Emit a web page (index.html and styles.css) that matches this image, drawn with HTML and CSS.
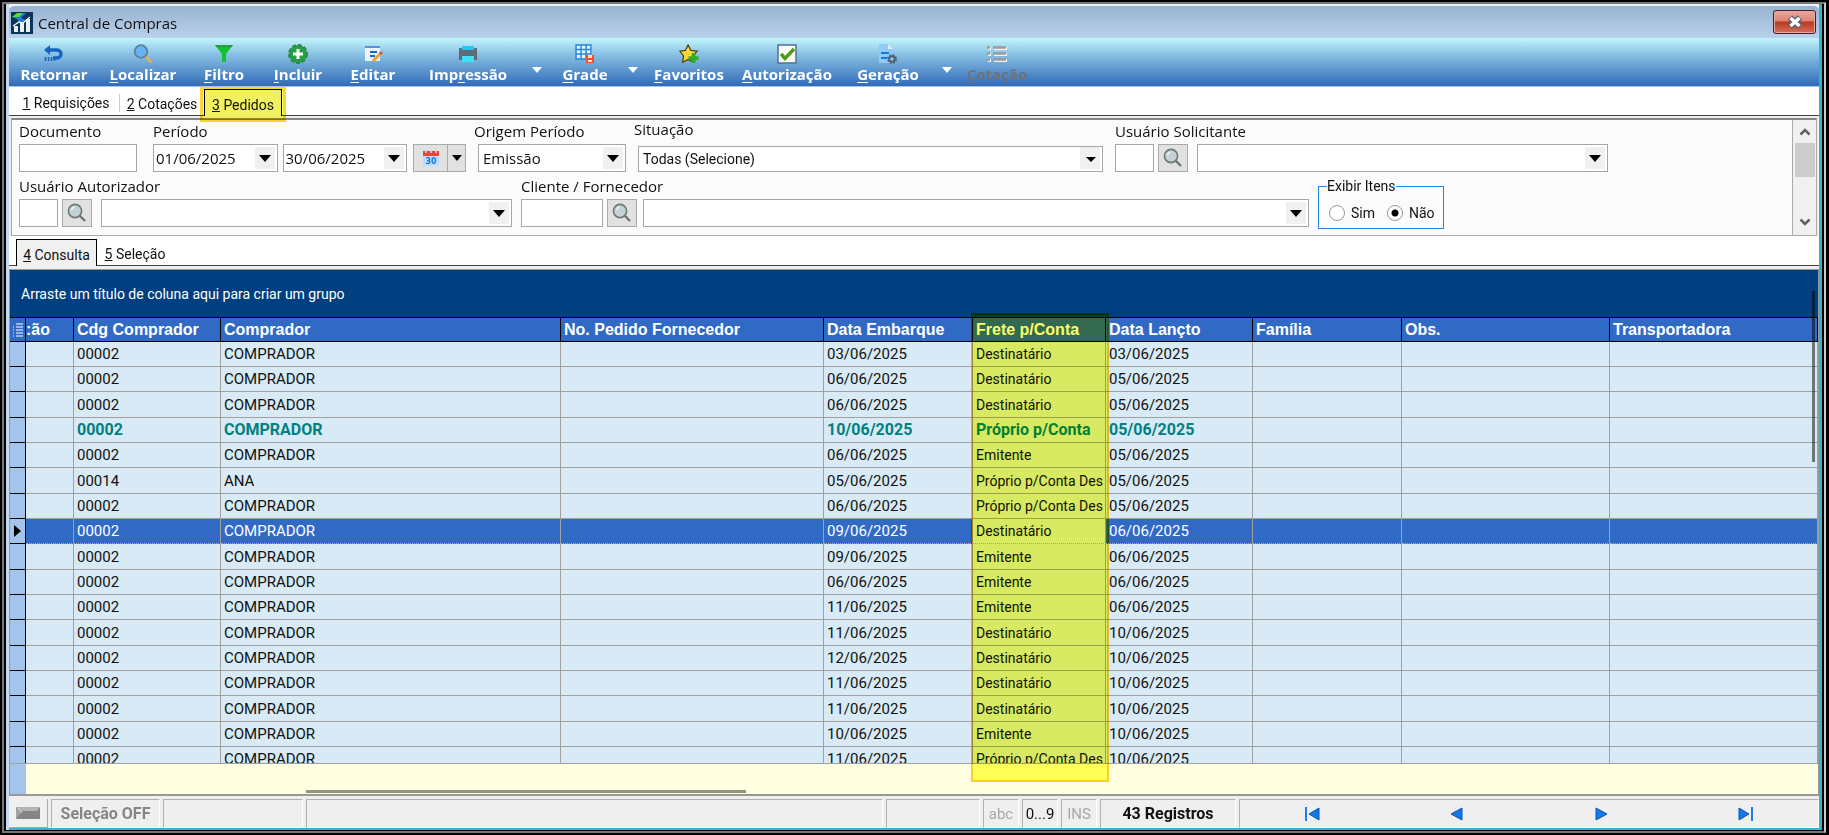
FILE: index.html
```html
<!DOCTYPE html>
<html lang="pt-BR">
<head>
  <meta charset="UTF-8" />
  <meta name="viewport" content="width=device-width, initial-scale=1.0"/>
  <title>Central de Compras</title>
  <link rel="stylesheet" href="styles.css">
</head>
<body>

<!-- shared magnifier -->
<svg width="0" height="0" class="defs">
  <symbol id="lupa" viewBox="0 0 20 20">
    <path d="M12.5 12.5L18 18" stroke="#6f7373" stroke-width="2.4"/>
    <circle cx="8" cy="8" r="6.6" fill="#c3d3d3" stroke="#6f7878" stroke-width="1.6"/>
    <path d="M4.5 7a4 4 0 0 1 3-3" stroke="#eef5f5" stroke-width="1.4" fill="none"/>
  </symbol>
</svg>

<div class="window">
  <header class="titlebar">
    <svg class="app-icon" viewBox="0 0 22 22">
      <rect width="22" height="22" fill="#0a3558"/>
      <path d="M1 5L7 1h8l-5 5 5 2-6 4-3-5z" fill="#1d7fd6"/>
      <path d="M1 5L6 1h6L8 5z" fill="#5fdc1c"/>
      <path d="M3 14h4v6H3zM9 11h4v9H9zM15 7h4v13h-4z" fill="#e8eef4"/>
      <path d="M2 14l6-4 4 1 7-6" stroke="#fff" stroke-width="1.2" fill="none"/>
    </svg>
    <h1>Central de Compras</h1>
    <button class="close" aria-label="Fechar">
      <svg width="18" height="14" viewBox="0 0 18 14"><path d="M4 2.500L14 11.500M14 2.500L4 11.500" stroke="#5b5e70" stroke-width="6"/><path d="M4.500 3L13.500 11M13.500 3L4.500 11" stroke="#fff" stroke-width="3.400"/></svg>
    </button>
  </header>

  <nav class="toolbar">
    <button class="w90"><svg viewBox="0 0 20 20"><path d="M5 6h8a4 4 0 0 1 0 8H9" fill="none" stroke="#1565c0" stroke-width="3.400"/><path d="M0 6l6-5v10z" fill="#1565c0"/><path d="M1.500 13v4M4.500 13v4M7.500 13v4M10.500 15v2" stroke="#1565c0" stroke-width="1.500"/></svg>Retornar</button>
    <button class="w88"><svg viewBox="0 0 20 20"><path d="M12 12l6.500 6.500" stroke="#d9b35c" stroke-width="2.800"/><circle cx="8" cy="7.500" r="6.300" fill="#64b5f6" stroke="#5f7f9c" stroke-width="1.800"/></svg><span><u>L</u>ocalizar</span></button>
    <button class="w74"><svg viewBox="0 0 20 20"><path d="M1 1h18l-7 9v8H8v-8z" fill="#12c22f"/><path d="M1 1h18l-2 2.500H3z" fill="#2e9b3c"/></svg><span><u>F</u>iltro</span></button>
    <button class="w74"><svg viewBox="0 0 20 20"><circle cx="10" cy="10" r="9" fill="#23a045" stroke="#2c8a45" stroke-width="2" stroke-dasharray="4 2"/><path d="M10 5v10M5 10h10" stroke="#fff" stroke-width="3"/></svg><span><u>I</u>ncluir</span></button>
    <button class="w76"><svg viewBox="0 0 20 20"><path d="M2 2h15v15H2z" fill="#eef3fb"/><path d="M2 2h15v2H2z" fill="#5c8fd8"/><path d="M7 8h7M7 12h5" stroke="#1668d0" stroke-width="2"/><path d="M10 17l8-8" stroke="#f4a11f" stroke-width="3"/><path d="M17 10l2-2" stroke="#e05252" stroke-width="3"/></svg><span><u>E</u>ditar</span></button>
    <button class="w114"><svg viewBox="0 0 20 20"><path d="M4 2h12v5H4z" fill="#26c6f2"/><path d="M1 4h3v2h12V4h3v12h-3v-4H4v4H1z" fill="#606a74"/><rect x="4" y="12" width="12" height="6" fill="#40e0fb"/></svg><span>Imp<u>r</u>essão</span></button>
    <button class="drop" aria-label="Opções de impressão"></button>
    <button class="w72"><svg viewBox="0 0 20 20"><path d="M1 1h16v14H1z" fill="#e6f4fc"/><path d="M1 1h15v14H1zM1 5.500h15M1 10h15M6 1v14M11 1v14" fill="none" stroke="#2487dc" stroke-width="1.500"/><path d="M11 11h8v8h-8z" fill="#f4511e"/><path d="M13 11h4v3h-4zM13 16h4v2h-4z" fill="#ffe3dc"/></svg><span><u>G</u>rade</span></button>
    <button class="drop" aria-label="Opções de grade"></button>
    <button class="w88"><svg class="star" viewBox="0 0 22 22"><path d="M10 1l3 6 7 1-5 5 1 7-6-3-6 3 1-7-4-5 6-1z" fill="#fdd835" stroke="#4b3d10" stroke-width="1.300"/><path d="M16 10v11M10.500 15.500h11" stroke="#2fae2b" stroke-width="4.200"/></svg><span><u>F</u>avoritos</span></button>
    <button class="w108"><svg viewBox="0 0 20 20"><rect x="1" y="1" width="18" height="18" fill="#f8faf6" stroke="#4e7396" stroke-width="1.500"/><path d="M4 10l4 4.500L17 5" fill="none" stroke="#4f9c12" stroke-width="3.400"/></svg><span><u>A</u>utorização</span></button>
    <button class="w94"><svg viewBox="0 0 20 20"><path d="M1 0h9l5 5v14H1z" fill="#90caf9"/><path d="M10 0v5h5z" fill="#e1f1fd"/><path d="M3 9h8M3 14h6" stroke="#1976d2" stroke-width="2.200"/><circle cx="14" cy="15" r="2.800" fill="none" stroke="#4b626e" stroke-width="2"/><circle cx="14" cy="15" r="4.200" fill="none" stroke="#4b626e" stroke-width="1.500" stroke-dasharray="2 1.300"/></svg><span><u>G</u>eração</span></button>
    <button class="drop" aria-label="Opções de geração"></button>
    <button class="w76" disabled><svg viewBox="0 0 20 20"><path d="M1 4.500h3M7 4.500h13M1 10.500h3M7 10.500h13M1 16.500h3M7 16.500h13" stroke="#f2f2f2" stroke-width="3"/><path d="M0 3.500h3M6 3.500h13M0 9.500h3M6 9.500h13M0 15.500h3M6 15.500h13" stroke="#9b9b9b" stroke-width="2.400"/></svg><span><u>C</u>otação</span></button>
  </nav>

  <div class="tabs main-tabs">
    <button class="tab-req"><u>1</u>&nbsp;Requisições</button>
    <button class="tab-cot"><u>2</u>&nbsp;Cotações</button>
    <button class="tab-ped active marked"><u>3</u>&nbsp;Pedidos</button>
  </div>

  <section class="filters">
    <form class="fields">
      <div class="row row1">
        <div class="field">
          <label for="doc">Documento</label>
          <input id="doc" class="doc" type="text">
        </div>
        <div class="field">
          <label for="ini">Período</label>
          <div class="line date-line">
            <span class="combo date"><input id="ini" type="text" value="01/06/2025"></span>
            <span class="combo date"><input type="text" value="30/06/2025" aria-label="Período final"></span>
            <div class="calendar">
              <button type="button" class="cal" aria-label="Calendário"><svg viewBox="0 0 18 18"><rect x="1" y="5" width="16" height="12" fill="#bbdefb"/><rect x="1" y="2" width="16" height="5" fill="#e8453c"/><path d="M4 0v4M9 0v4M14 0v4" stroke="#d5dde2" stroke-width="1.500"/><text x="9" y="15" text-anchor="middle">30</text></svg></button>
              <button type="button" class="cal-drop" aria-label="Opções de período"></button>
            </div>
          </div>
        </div>
        <div class="field origem">
          <label for="origem">Origem Período</label>
          <span class="combo"><select id="origem"><option>Emissão</option></select></span>
        </div>
        <div class="field situacao">
          <label for="sit">Situação</label>
          <span class="combo short"><select id="sit"><option>Todas (Selecione)</option></select></span>
        </div>
        <div class="field">
          <label for="sol">Usuário Solicitante</label>
          <div class="line">
            <input id="sol" class="code" type="text">
            <button type="button" class="find" aria-label="Procurar"><svg><use href="#lupa"/></svg></button>
            <span class="combo grow"><select aria-label="Nome do solicitante"><option></option></select></span>
          </div>
        </div>
      </div>
      <div class="row row2">
        <div class="field">
          <label for="aut">Usuário Autorizador</label>
          <div class="line">
            <input id="aut" class="code" type="text">
            <button type="button" class="find" aria-label="Procurar"><svg><use href="#lupa"/></svg></button>
            <span class="combo grow"><select aria-label="Nome do autorizador"><option></option></select></span>
          </div>
        </div>
        <div class="field">
          <label for="cli">Cliente / Fornecedor</label>
          <div class="line client">
            <input id="cli" class="code wide" type="text">
            <button type="button" class="find" aria-label="Procurar"><svg><use href="#lupa"/></svg></button>
            <span class="combo grow"><select aria-label="Nome do fornecedor"><option></option></select></span>
          </div>
        </div>
        <fieldset>
          <legend>Exibir Itens</legend>
          <label><input type="radio" name="itens">Sim</label>
          <label><input type="radio" name="itens" checked>Não</label>
        </fieldset>
      </div>
    </form>
    <div class="scroll">
      <svg viewBox="0 0 12 8"><path d="M1.500 6.500L6 2l4.500 4.500"/></svg>
      <div class="thumb"></div>
      <svg class="down" viewBox="0 0 12 8"><path d="M1.500 1.500L6 6l4.500-4.500"/></svg>
    </div>
  </section>

  <div class="tabs sub-tabs">
    <button class="tab-con active"><u>4</u>&nbsp;Consulta</button>
    <button class="tab-sel"><u>5</u>&nbsp;Seleção</button>
  </div>

  <main class="grid">
    <div class="group-bar">Arraste um título de coluna aqui para criar um grupo</div>
    <div class="rows">
      <table>
        <colgroup>
          <col class="c-ind"><col class="c-cut"><col class="c-cdg"><col class="c-comp"><col class="c-ped"><col class="c-emb"><col class="c-fre"><col class="c-lan"><col class="c-fam"><col class="c-obs"><col>
        </colgroup>
        <thead>
          <tr><th><svg class="list" viewBox="0 0 10 14"><path d="M0 4h1M0 7h1M0 10h1M0 13h1M3 1h7M3 4h7M3 7h7M3 10h7M3 13h7" stroke="#fff" stroke-width="1"/></svg></th><th class="cut">:ão</th><th>Cdg Comprador</th><th>Comprador</th><th>No. Pedido Fornecedor</th><th>Data Embarque</th><th>Frete p/Conta</th><th>Data Lançto</th><th>Família</th><th>Obs.</th><th>Transportadora</th></tr>
        </thead>
        <tbody>
          <tr><td></td><td></td><td>00002</td><td>COMPRADOR</td><td></td><td>03/06/2025</td><td>Destinatário</td><td>03/06/2025</td><td></td><td></td><td></td></tr>
          <tr><td></td><td></td><td>00002</td><td>COMPRADOR</td><td></td><td>06/06/2025</td><td>Destinatário</td><td>05/06/2025</td><td></td><td></td><td></td></tr>
          <tr><td></td><td></td><td>00002</td><td>COMPRADOR</td><td></td><td>06/06/2025</td><td>Destinatário</td><td>05/06/2025</td><td></td><td></td><td></td></tr>
          <tr class="strong"><td></td><td></td><td>00002</td><td>COMPRADOR</td><td></td><td>10/06/2025</td><td>Próprio p/Conta</td><td>05/06/2025</td><td></td><td></td><td></td></tr>
          <tr><td></td><td></td><td>00002</td><td>COMPRADOR</td><td></td><td>06/06/2025</td><td>Emitente</td><td>05/06/2025</td><td></td><td></td><td></td></tr>
          <tr><td></td><td></td><td>00014</td><td>ANA</td><td></td><td>05/06/2025</td><td>Próprio p/Conta Des</td><td>05/06/2025</td><td></td><td></td><td></td></tr>
          <tr><td></td><td></td><td>00002</td><td>COMPRADOR</td><td></td><td>06/06/2025</td><td>Próprio p/Conta Des</td><td>05/06/2025</td><td></td><td></td><td></td></tr>
          <tr class="selected"><td><i class="pointer"></i></td><td></td><td>00002</td><td>COMPRADOR</td><td></td><td>09/06/2025</td><td class="focus">Destinatário</td><td>06/06/2025</td><td></td><td></td><td></td></tr>
          <tr><td></td><td></td><td>00002</td><td>COMPRADOR</td><td></td><td>09/06/2025</td><td>Emitente</td><td>06/06/2025</td><td></td><td></td><td></td></tr>
          <tr><td></td><td></td><td>00002</td><td>COMPRADOR</td><td></td><td>06/06/2025</td><td>Emitente</td><td>06/06/2025</td><td></td><td></td><td></td></tr>
          <tr><td></td><td></td><td>00002</td><td>COMPRADOR</td><td></td><td>11/06/2025</td><td>Emitente</td><td>06/06/2025</td><td></td><td></td><td></td></tr>
          <tr><td></td><td></td><td>00002</td><td>COMPRADOR</td><td></td><td>11/06/2025</td><td>Destinatário</td><td>10/06/2025</td><td></td><td></td><td></td></tr>
          <tr><td></td><td></td><td>00002</td><td>COMPRADOR</td><td></td><td>12/06/2025</td><td>Destinatário</td><td>10/06/2025</td><td></td><td></td><td></td></tr>
          <tr><td></td><td></td><td>00002</td><td>COMPRADOR</td><td></td><td>11/06/2025</td><td>Destinatário</td><td>10/06/2025</td><td></td><td></td><td></td></tr>
          <tr><td></td><td></td><td>00002</td><td>COMPRADOR</td><td></td><td>11/06/2025</td><td>Destinatário</td><td>10/06/2025</td><td></td><td></td><td></td></tr>
          <tr><td></td><td></td><td>00002</td><td>COMPRADOR</td><td></td><td>10/06/2025</td><td>Emitente</td><td>10/06/2025</td><td></td><td></td><td></td></tr>
          <tr><td></td><td></td><td>00002</td><td>COMPRADOR</td><td></td><td>11/06/2025</td><td>Próprio p/Conta Des</td><td>10/06/2025</td><td></td><td></td><td></td></tr>
        </tbody>
      </table>
    </div>
    <div class="summary"></div>
    <div class="marker"></div>
    <div class="vbar"></div>
    <div class="hbar"></div>
  </main>

  <footer class="status">
    <button class="led" aria-label="Seleção"><svg width="24" height="12" viewBox="0 0 24 12"><path d="M0 0h24v12H0z" fill="#858585"/><path d="M0 0h24l-3 4H5z" fill="#b4b4b4"/><path d="M0 0l5 6-5 6z" fill="#a2a2a2"/><path d="M2 1l4 5" stroke="#eee"/></svg></button>
    <div class="cell s-sel">Seleção OFF</div>
    <div class="cell s-a"></div>
    <div class="cell s-b"></div>
    <div class="cell s-c"></div>
    <div class="cell s-key">abc</div>
    <div class="cell s-key on">0...9</div>
    <div class="cell s-key">INS</div>
    <div class="cell s-reg">43 Registros</div>
    <div class="cell s-nav">
      <button aria-label="Primeiro"><svg viewBox="0 0 16 14"><path d="M1 0h2v14H1z" fill="#1b7fe8"/><path d="M15 1v12L5 7z" fill="#1478e6" stroke="#0b56b4"/></svg></button>
      <button aria-label="Anterior"><svg viewBox="0 0 16 14"><path d="M13 1v12L2 7z" fill="#1478e6" stroke="#0b56b4"/></svg></button>
      <button aria-label="Próximo"><svg viewBox="0 0 16 14"><path d="M3 1v12l11-6z" fill="#1478e6" stroke="#0b56b4"/></svg></button>
      <button aria-label="Último"><svg viewBox="0 0 16 14"><path d="M1 1v12l10-6z" fill="#1478e6" stroke="#0b56b4"/><path d="M13 0h2v14h-2z" fill="#1b7fe8"/></svg></button>
    </div>
  </footer>
</div>

</body>
</html>
```
FILE: styles.css
```css
* {
  box-sizing: border-box;
}
body {
  margin: 0;
  height: 100vh;
  padding: 2px 3px 2px 2px;
  background: #000;
  font-family: Roboto, "Liberation Sans", sans-serif;
  font-size: 14px;
  color: #111;
  overflow: hidden;
}
button, input, select {
  font: inherit;
  color: inherit;
  margin: 0;
}
button {
  border: 0;
  padding: 0;
  background: none;
}
.defs {
  position: absolute;
}

/* window frame */
.window {
  height: 100%;
  display: flex;
  flex-direction: column;
  border: 2px solid #777;
  border-right-color: #ccc;
  background: #efefef;
  padding: 0 5px 3px;
  box-shadow: inset 2px 0 #000, inset -2px -1px #000, inset 5px 0 #c5daf0, inset -5px -3px #2fb4cf;
}
.titlebar {
  flex: none;
  height: 34px;
  padding: 2px 2px 0;
  display: flex;
  align-items: center;
  background: linear-gradient(#98b2d0, #b9d1ea);
  border-top: 2px solid #e8f1f8;
  border-radius: 6px 6px 0 0;
}
.app-icon {
  width: 22px;
  height: 22px;
}
h1 {
  flex: 1;
  margin: 0 0 0 5px;
  font: 15px/20px "Open Sans", sans-serif;
}
.close {
  width: 43px;
  height: 24px;
  display: grid;
  place-items: center;
  border: 1px solid #4b1a26;
  border-radius: 3px;
  margin: 0 1px 2px 0;
  box-shadow: inset 0 0 0 1px #e8a9a0;
  background: linear-gradient(#e9a89b, #dd8474 45%, #b8391f 50%, #d4705c);
}

/* toolbar */
.toolbar {
  flex: none;
  height: 49px;
  display: flex;
  background: linear-gradient(#c4f6fd, #8ac2e4 33%, #316ab8);
  border-bottom: 1px solid #a9c4e6;
}
.toolbar button {
  display: flex;
  flex-direction: column;
  align-items: center;
  padding-top: 6px;
  font: bold 15px/20px "Open Sans", sans-serif;
  color: #fff;
}
.toolbar svg {
  width: 20px;
  height: 20px;
}
.toolbar u {
  text-underline-offset: 2px;
}
.toolbar .star {
  width: 22px;
}
.toolbar button:disabled {
  color: #6c7278;
}
.toolbar .drop {
  width: 24px;
  padding-top: 29px;
}
.drop::after {
  content: "";
  border: 5px solid transparent;
  border-top: 6px solid #fff;
  border-bottom: 0;
}
.w72 { width: 72px; }
.w74 { width: 74px; }
.w76 { width: 76px; }
.w88 { width: 88px; }
.w90 { width: 90px; }
.w94 { width: 94px; }
.w108 { width: 108px; }
.w114 { width: 114px; }

/* tabs */
.tabs {
  flex: none;
  display: flex;
  align-items: flex-end;
  height: 29px;
  background: #fff;
  border-bottom: 1px solid #444;
}
.sub-tabs {
  height: 30px;
}
.tabs button {
  height: 26px;
  padding-top: 3px;
  border-right: 1px solid #ccc;
}
.tabs .tab-req {
  width: 111px;
  height: 18px;
  margin-bottom: 3px;
  padding: 0 0 0 4px;
}
.tabs .tab-cot {
  width: 84px;
  border-right: 0;
}
.tabs .active {
  position: relative;
  height: 27px;
  margin-bottom: -1px;
  border: 1px solid #000;
  border-bottom: 0;
  background: #f0f0f0;
}
.tab-ped { width: 78px; }
.tab-con { width: 81px; margin-left: 7px; }
.tabs .tab-sel {
  width: 76px;
  border: 0;
}
.marked::after {
  content: "";
  position: absolute;
  inset: -3px -5px -6px;
  border: 3px solid #ffd633;
  background: #ffff66;
  mix-blend-mode: multiply;
}

/* filter panel */
.filters {
  flex: none;
  display: flex;
  margin: 2px 2px 0;
  border: 1px solid #aaa;
  border-top: 2px solid #888;
  background: #fbfbfb;
}
.fields {
  flex: 1;
  min-width: 0;
  padding: 2px 0 8px 7px;
}
.row {
  display: grid;
}
.row1 {
  grid-template-columns: 122px 313px 148px 465px 493px;
  column-gap: 12px;
}
.row2 {
  grid-template-columns: 493px 788px 126px;
  column-gap: 9px;
  margin-top: 5px;
}
.field > label {
  display: block;
  height: 19px;
  margin-bottom: 3px;
  font: 15px/19px "Open Sans", sans-serif;
}
.fields .situacao label {
  margin: -2px 0 5px -4px;
}
.origem label {
  margin-left: -4px;
}
.fields input[type="text"], .fields select {
  height: 28px;
  border: 1px solid #a6a6a6;
  border-radius: 0;
  background: #fff;
  padding: 0 2px;
  font: 15px/20px "Open Sans", sans-serif;
}
.fields select {
  appearance: none;
  padding-left: 4px;
}
.doc {
  width: 118px;
}
.line {
  display: flex;
}
.date-line {
  gap: 5px;
}
.combo {
  position: relative;
  display: block;
}
.combo input, .combo select {
  width: 100%;
  display: block;
}
.combo::before {
  content: "";
  position: absolute;
  top: 3px;
  right: 3px;
  bottom: 3px;
  width: 20px;
  background: #f0f0f0;
}
.combo::after {
  content: "";
  position: absolute;
  top: 11px;
  right: 7px;
  border: 6px solid transparent;
  border-top: 7px solid #000;
  border-bottom: 0;
}
.date {
  width: 126px;
}
.short {
  padding-top: 2px;
}
.fields .short select {
  height: 26px;
  font: 14px/20px Roboto, sans-serif;
}
.short::after {
  top: 13px;
  border-width: 5px 5px 0;
}
.grow {
  flex: 1;
}
.calendar {
  display: flex;
  margin-left: 1px;
}
.cal, .cal-drop, .find {
  height: 28px;
  border: 1px solid #aaa;
  background: #e1e1e1;
  display: grid;
  place-items: center;
}
.cal { width: 35px; }
.cal svg {
  width: 18px;
  height: 18px;
}
.cal text {
  font: bold 8px "DejaVu Sans", sans-serif;
  fill: #1976d2;
}
.cal-drop {
  width: 18px;
  border-left: 0;
}
.cal-drop::after {
  content: "";
  border: 5px solid transparent;
  border-top: 6px solid #000;
  border-bottom: 0;
}
.code {
  width: 39px;
}
.wide {
  width: 82px;
}
.find {
  width: 30px;
  margin: 0 9px 0 4px;
}
.find svg {
  width: 20px;
  height: 20px;
}
.client .find {
  margin-right: 6px;
}
fieldset {
  display: flex;
  align-items: center;
  gap: 12px;
  margin: 0 0 -2px;
  padding: 2px 4px 0 10px;
  border: 1px solid #1e88e5;
}
legend {
  margin-left: -2px;
  padding: 0;
  line-height: 18px;
}
fieldset label {
  display: flex;
  align-items: center;
  gap: 6px;
}
fieldset input {
  appearance: none;
  width: 16px;
  height: 16px;
  border: 1px solid #999;
  border-radius: 50%;
  background: #fff;
}
fieldset input:checked {
  background: radial-gradient(circle, #000 3px, #fff 4px);
}
.scroll {
  width: 24px;
  display: flex;
  flex-direction: column;
  align-items: center;
  border-left: 1px solid #aaa;
  background: #f0f0f0;
  padding: 8px 2px 9px;
}
.scroll svg {
  width: 12px;
  height: 8px;
  fill: none;
  stroke: #606060;
  stroke-width: 2.5;
}
.thumb {
  width: 20px;
  height: 34px;
  margin-top: 7px;
  background: #cdcdcd;
}
.scroll .down {
  margin-top: auto;
}

/* data grid */
.grid {
  position: relative;
  flex: 1;
  min-height: 0;
  display: flex;
  flex-direction: column;
  margin-top: 3px;
  border: 1px solid #999;
  border-bottom-width: 2px;
}
.group-bar {
  flex: none;
  height: 47px;
  padding: 14px 11px;
  line-height: 20px;
  background: #004080;
  color: #fff;
}
.rows {
  flex: 1;
  min-height: 0;
  overflow: hidden;
  background: #d8eaf5;
}
table {
  width: 100%;
  table-layout: fixed;
  border-collapse: separate;
  border-spacing: 0;
  font-size: 15px;
}
.c-ind { width: 16px; }
.c-cut { width: 48px; }
.c-cdg { width: 147px; }
.c-comp { width: 340px; }
.c-ped { width: 263px; }
.c-emb { width: 149px; }
.c-fre { width: 133px; }
.c-lan { width: 147px; }
.c-fam { width: 149px; }
.c-obs { width: 208px; }
th, td {
  height: 25px;
  padding: 0 3px;
  line-height: 20px;
  text-align: left;
  white-space: nowrap;
  overflow: hidden;
  border-right: 1px solid #a0a0a0;
  border-bottom: 1px solid #a0a0a0;
}
th {
  background: #316ac5;
  color: #fff;
  font-family: "Liberation Sans", sans-serif;
  font-size: 16px;
  border-color: #000;
  border-top: 1px solid #000;
}
.cut {
  padding-left: 0;
}
.list {
  display: block;
  width: 10px;
  height: 14px;
}
/* rows alternate 25 / 25 / 26 */
tbody tr:nth-child(3n) td {
  height: 26px;
}
td:nth-child(7) {
  font-size: 14px;
}
td:first-child {
  background: #a5c4ec;
  border-color: #000;
}
.strong td {
  font-size: 16px;
  font-weight: bold;
  color: #008080;
}
.selected td:not(:first-child) {
  background: #316ac5;
  color: #fff;
  border-bottom: 1px dotted #c9a56c;
}
.pointer {
  display: block;
  width: 0;
  margin-left: 1px;
  border: 6px solid transparent;
  border-left: 7px solid #000;
  border-right: 0;
}
.selected td.focus:not(:first-child) {
  background: #d8eaf5;
  color: #111;
}
.summary {
  flex: none;
  height: 31px;
  border-top: 1px solid #a0a0a0;
  background: linear-gradient(90deg, #a5c4ec 16px, #ffffe1 16px);
}
/* highlighted column */
.marker {
  position: absolute;
  left: 961px;
  top: 43px;
  bottom: 12px;
  width: 138px;
  border: 2px solid #ffcc33;
  background: #ffff66;
  background-clip: padding-box;
  mix-blend-mode: multiply;
}
.vbar {
  position: absolute;
  right: 3px;
  top: 21px;
  width: 3px;
  height: 171px;
  background: rgba(0, 0, 0, 0.5);
}
.hbar {
  position: absolute;
  left: 296px;
  bottom: 1px;
  width: 440px;
  height: 3px;
  background: #94947f;
}

/* status bar */
.status {
  flex: none;
  height: 32px;
  padding-top: 3px;
  display: flex;
  gap: 3px;
}
.led {
  width: 39px;
  display: grid;
  place-items: center;
  border-right: 1px solid #aaa;
  border-bottom: 1px solid #aaa;
}
.cell {
  display: flex;
  align-items: center;
  justify-content: center;
  border: 1px solid #b0b0b0;
  border-right-color: #fff;
  border-bottom-color: #fff;
  font-size: 15px;
}
.s-sel {
  width: 109px;
  color: #858585;
  font: bold 16px/20px Roboto, sans-serif;
}
.s-a { width: 140px; }
.s-b { width: 577px; }
.s-c { width: 94px; }
.s-key {
  width: 36px;
  color: #a8a8a8;
}
.on {
  color: #111;
}
.s-reg {
  width: 136px;
  font: bold 16px/20px Roboto, sans-serif;
}
.s-nav {
  flex: 1;
  display: grid;
  grid-template-columns: repeat(4, 1fr);
}
.s-nav button {
  display: grid;
  place-items: center;
}
.s-nav svg {
  width: 16px;
  height: 14px;
}
```
